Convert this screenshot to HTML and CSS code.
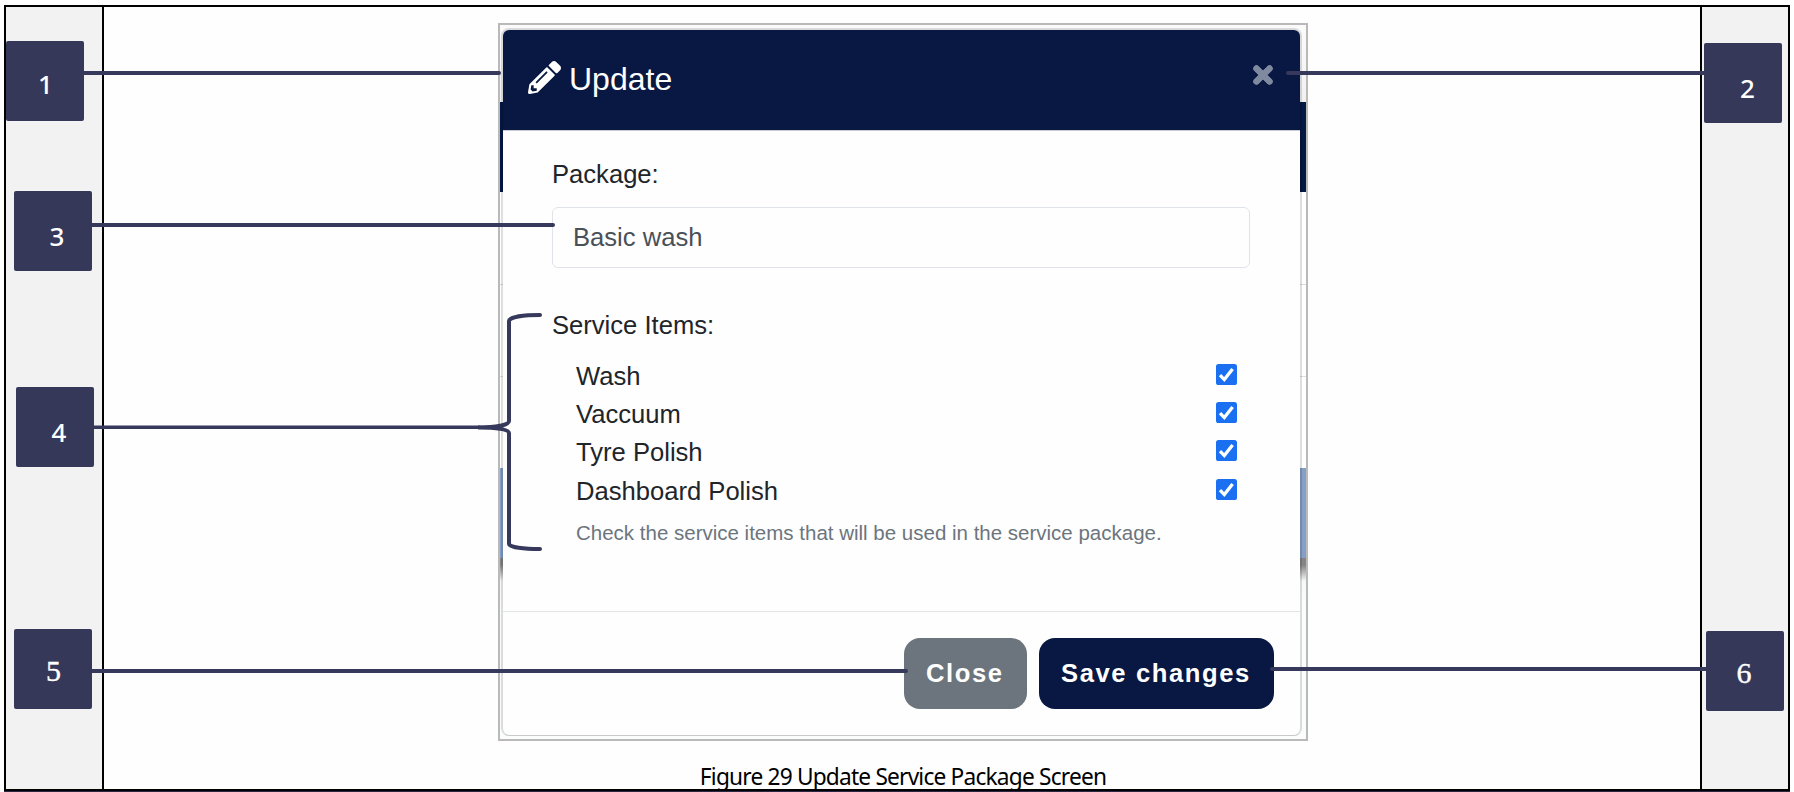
FILE: index.html
```html
<!DOCTYPE html>
<html lang="en">
<head>
<meta charset="utf-8">
<title>Update Service Package Screen</title>
<link rel="stylesheet" href="styles.css">
</head>
<body>
<div class="sheet">
  <div class="rail rail-left"></div>
  <main class="figure">
    <div class="frame">
      <section class="modal">
        <header class="modal-header">
          <svg class="pencil" viewBox="0 0 512 512"><path fill="#fff" d="M497.9 142.1l-46.1 46.1c-4.7 4.7-12.3 4.7-17 0l-111-111c-4.7-4.7-4.7-12.3 0-17l46.1-46.1c18.7-18.7 49.1-18.7 67.9 0l60.1 60.1c18.8 18.7 18.8 49.1 0 67.9zM284.2 99.8L21.6 362.4.4 483.9c-2.9 16.4 11.4 30.6 27.8 27.8l121.5-21.3 262.6-262.6c4.7-4.7 4.7-12.3 0-17l-111-111c-4.8-4.7-12.4-4.7-17.1 0zM124.1 339.9c-5.5-5.5-5.5-14.3 0-19.8l154-154c5.5-5.5 14.3-5.5 19.8 0s5.5 14.3 0 19.8l-154 154c-5.5 5.5-14.3 5.5-19.8 0zM88 424h48v36.3l-64.5 11.3-31.1-31.1L51.7 376H88v48z"/></svg>
          <h1 class="modal-title">Update</h1>
          <svg class="dismiss" viewBox="0 0 20 20"><path d="M2.6 2.6L17.4 17.4M17.4 2.6L2.6 17.4" stroke="#7f899f" stroke-width="5.8"/><path d="M3.4 3.4L16.6 16.6M16.6 3.4L3.4 16.6" stroke="#7f899f" stroke-width="6.4" stroke-linecap="round"/></svg>
        </header>
        <div class="modal-body">
          <div class="label">Package:</div>
          <div class="field">Basic wash</div>
          <div class="label label-items">Service Items:</div>
          <div class="items">
            <div class="item"><span>Wash</span><svg class="check" viewBox="0 0 21 21"><rect width="21" height="21" rx="2.6" fill="#1a70f0"/><path d="M4 11.2L8.3 15.6L16.6 4.9" fill="none" stroke="#fff" stroke-width="3.3"/></svg></div>
            <div class="item"><span>Vaccuum</span><svg class="check" viewBox="0 0 21 21"><rect width="21" height="21" rx="2.6" fill="#1a70f0"/><path d="M4 11.2L8.3 15.6L16.6 4.9" fill="none" stroke="#fff" stroke-width="3.3"/></svg></div>
            <div class="item"><span>Tyre Polish</span><svg class="check" viewBox="0 0 21 21"><rect width="21" height="21" rx="2.6" fill="#1a70f0"/><path d="M4 11.2L8.3 15.6L16.6 4.9" fill="none" stroke="#fff" stroke-width="3.3"/></svg></div>
            <div class="item"><span>Dashboard Polish</span><svg class="check" viewBox="0 0 21 21"><rect width="21" height="21" rx="2.6" fill="#1a70f0"/><path d="M4 11.2L8.3 15.6L16.6 4.9" fill="none" stroke="#fff" stroke-width="3.3"/></svg></div>
            <div class="hint">Check the service items that will be used in the service package.</div>
          </div>
        </div>
        <footer class="modal-footer">
          <div class="btn btn-close">Close</div>
          <div class="btn btn-save">Save changes</div>
        </footer>
      </section>
    </div>
    <p class="caption"><span>Figure 29 Update Service Package Screen</span></p>
  </main>
  <div class="rail"></div>
</div>

<!-- Callout lines and numbered markers laid over the figure -->
<svg class="lines" width="1794" height="792" viewBox="0 0 1794 792">
  <g fill="none" stroke="#36395b" stroke-width="4" stroke-linecap="round">
    <path d="M80 73H499M1288 73H1710M88 225H553M88 671H906M1272 669H1710"/>
    <path stroke-width="3.5" d="M90 427.3H480"/>
    <path d="M540 315C524 315 509 317 509 321V421C509 425 496 427.5 478 427.5C496 427.5 509 429 509 433V544C509 547 524 549 540 549"/>
  </g>
</svg>
<div class="marker m1">1</div>
<div class="marker m2">2</div>
<div class="marker m3">3</div>
<div class="marker m4">4</div>
<div class="marker serif m5">5</div>
<div class="marker serif m6">6</div>
</body>
</html>
```
FILE: styles.css
```css
* { box-sizing: border-box; }

body {
  margin: 0;
  height: 792px;
  overflow: hidden;
  position: relative;
  padding: 5px 4px 0;
  background: #fff;
  font-family: "Liberation Sans", Arial, sans-serif;
}

.sheet {
  display: grid;
  grid-template-columns: 96px 1596px 86px;
  gap: 2px;
  width: 1786px;
  height: 786px;
  padding: 2px;
  background: #000;
  box-shadow: 0 1px 0 #2a2745;
}

.rail { background: #f2f2f2; }

.figure {
  display: flex;
  flex-direction: column;
  height: 782px;
  padding: 16px 0 0 394px;
  background: #fefefe;
}

.frame {
  flex: none;
  width: 810px;
  height: 718px;
  padding: 3px 4px 3px 1px;
  border: 2px solid #b9b9b9;
  background: linear-gradient(#fbfbfb 0, #f1f1f1 77px, #041844 77px, #041844 167px, #fff 167px, #fff 259px, #dcdee0 259px, #dcdee0 260px, #fff 260px, #fff 351px, #dcdee0 351px, #dcdee0 352px, #fff 352px, #fff 443px, #869fc6 443px, #869fc6 533px, #858585 533px, #858585 540px, #f6f7f7 556px, #fbfcfc 580px);
}

.modal {
  display: flex;
  flex-direction: column;
  width: 801px;
  height: 708px;
  border: 2px solid rgba(0, 0, 0, .13);
  border-bottom: 1px solid rgba(0, 0, 0, .2);
  border-radius: 8px;
  background: #fefefe;
  background-clip: padding-box;
  overflow: hidden;
}

.modal-header {
  display: flex;
  flex: none;
  height: 101px;
  padding: 0 27px 0 25px;
  border-bottom: 1px solid #c9ccd2;
  background: #081843;
  color: #fff;
}

.pencil { width: 33px; height: 33px; margin-top: 31px; }

.modal-title {
  margin: 25px auto 0 8px;
  font-size: 32px;
  line-height: 48px;
  font-weight: 400;
}

.dismiss { width: 20px; height: 20px; margin-top: 35px; }

.modal-body {
  flex: none;
  height: 480px;
  padding: 24px 50px 0 49px;
  font-size: 25.6px;
  line-height: 38.4px;
  color: #212529;
}

.field {
  height: 61px;
  margin-top: 14px;
  padding: 10px 20px;
  border: 1.6px solid #e0e3e7;
  border-radius: 6px;
  color: #495057;
}

.label-items { margin-top: 38px; }

.items { padding: 12px 13px 0 24px; }

.item {
  display: flex;
  justify-content: space-between;
  height: 38.3px;
}

.check { width: 21px; height: 21px; margin-top: 7px; }

.hint {
  margin-top: 8px;
  font-size: 20.5px;
  line-height: 30.7px;
  color: #6c757d;
}

.modal-footer {
  display: flex;
  flex: 1;
  justify-content: flex-end;
  gap: 12px;
  padding: 26px 26px 0 0;
  border-top: 1px solid #e2e4e7;
}

.btn {
  height: 71px;
  padding: 0 0 0 22px;
  border-radius: 16px;
  font-size: 25.6px;
  font-weight: 700;
  line-height: 70px;
  letter-spacing: 1.6px;
  white-space: nowrap;
  color: #fff;
}

.btn-close { width: 123px; background: #6c757d; }
.btn-save { width: 235px; background: #081843; }

.caption {
  width: 810px;
  margin: 20px 0 0;
  text-align: center;
  font-family: "Noto Sans", sans-serif;
  font-size: 22.7px;
  line-height: 32px;
  letter-spacing: -.8px;
  color: #000;
  white-space: nowrap;
}

.lines { position: absolute; left: 0; top: 0; }

.marker {
  position: absolute;
  width: 78px;
  height: 80px;
  border-radius: 2px;
  background: #36385a;
  color: #fff;
  font-family: "Noto Sans", sans-serif;
  font-size: 26px;
  font-weight: 500;
  line-height: 86px;
  text-align: center;
}

.m1 { left: 6px; top: 41px; padding-left: 1px; }
.m2 { left: 1704px; top: 43px; padding-left: 9px; line-height: 90px; }
.m3 { left: 14px; top: 191px; padding-left: 8px; line-height: 90px; }
.m4 { left: 16px; top: 387px; padding-left: 8px; line-height: 90px; }
.serif { font-family: "Liberation Serif", serif; font-size: 30px; line-height: 84px; }
.m5 { left: 14px; top: 629px; padding-left: 1px; -webkit-text-stroke: .4px #fff; }
.m6 { left: 1706px; top: 631px; padding-right: 2px; -webkit-text-stroke: .4px #fff; }
```
